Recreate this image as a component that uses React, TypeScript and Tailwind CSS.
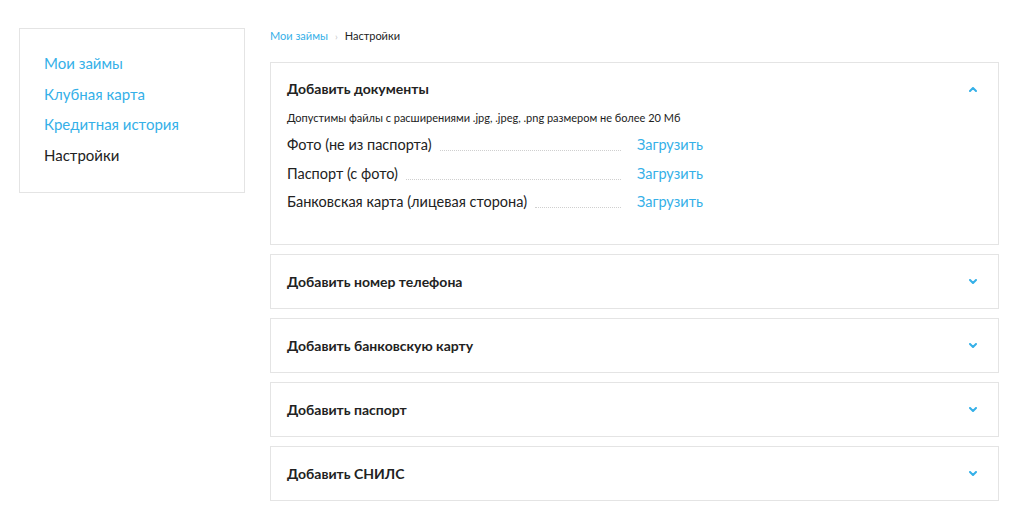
import { useState } from "react";

const BLUE = "text-[#35b0e8]";

const menu = [
  { label: "Мои займы", active: false },
  { label: "Клубная карта", active: false },
  { label: "Кредитная история", active: false },
  { label: "Настройки", active: true },
];

const docs = ["Фото (не из паспорта)", "Паспорт (с фото)", "Банковская карта (лицевая сторона)"];

const sections = [
  "Добавить номер телефона",
  "Добавить банковскую карту",
  "Добавить паспорт",
  "Добавить СНИЛС",
];

function Chevron({ up }: { up?: boolean }) {
  return (
    <svg width="8" height="5" viewBox="0 0 8 5" className={up ? "rotate-180" : ""}>
      <path d="M1 1 L4 4 L7 1" fill="none" stroke="#35b0e8" strokeWidth="2" strokeLinecap="round" strokeLinejoin="round" />
    </svg>
  );
}

export default function App() {
  const [open, setOpen] = useState(true);

  return (
    <div className="min-h-screen bg-white font-['Lato',sans-serif] text-[#222]">
      <div className="flex items-start gap-[25px] pl-[19px] pt-[28px]">
        {/* боковое меню */}
        <nav className="w-[226px] shrink-0 border border-[#e4e4e4] px-[24px] pt-[25px] pb-[28px] flex flex-col gap-[12.5px]">
          {menu.map(m => (
            <a
              key={m.label}
              className={`text-[15px] leading-[18px] ${m.active ? "text-[#222]" : BLUE}`}
            >
              {m.label}
            </a>
          ))}
        </nav>

        <main className="w-[729px]">
          <div className="flex items-center gap-[7px] text-[11px] leading-[16px] mb-[18px]">
            <a className={BLUE}>Мои займы</a>
            <span className="text-[#c8c8c8] text-[10px]">›</span>
            <span>Настройки</span>
          </div>

          <div className="flex flex-col gap-[9px]">
            <section className="border border-[#e4e4e4] h-[183px] px-[16px] pt-[18px]">
              <button
                onClick={() => setOpen(o => !o)}
                className="w-full flex items-center justify-between text-left"
              >
                <span className="text-[14px] leading-[16px] font-bold">Добавить документы</span>
                <span className="mr-[5px] flex"><Chevron up={open} /></span>
              </button>
              <p className="text-[11px] leading-[14px] mt-[14px]">
                Допустимы файлы с расширениями .jpg, .jpeg, .png размером не более 20 Мб
              </p>
              <div className="mt-[11px] flex flex-col gap-[10.5px]">
                {docs.map(d => (
                  <div key={d} className="flex items-center">
                    <div className="w-[334px] flex items-end">
                      <span className="text-[14.5px] leading-[18px] whitespace-nowrap">{d}</span>
                      <span className="flex-1 ml-[8px] mb-[3px] border-b border-dotted border-[#cfcfcf]" />
                    </div>
                    <a className={`ml-[16px] text-[14.5px] leading-[18px] ${BLUE}`}>Загрузить</a>
                  </div>
                ))}
              </div>
            </section>

            {sections.map(s => (
              <section key={s} className="border border-[#e4e4e4] h-[55px] px-[16px] pb-[1px] flex items-center justify-between">
                <span className="text-[14px] font-bold">{s}</span>
                <span className="mr-[5px] flex"><Chevron /></span>
              </section>
            ))}
          </div>
        </main>
      </div>
    </div>
  );
}
